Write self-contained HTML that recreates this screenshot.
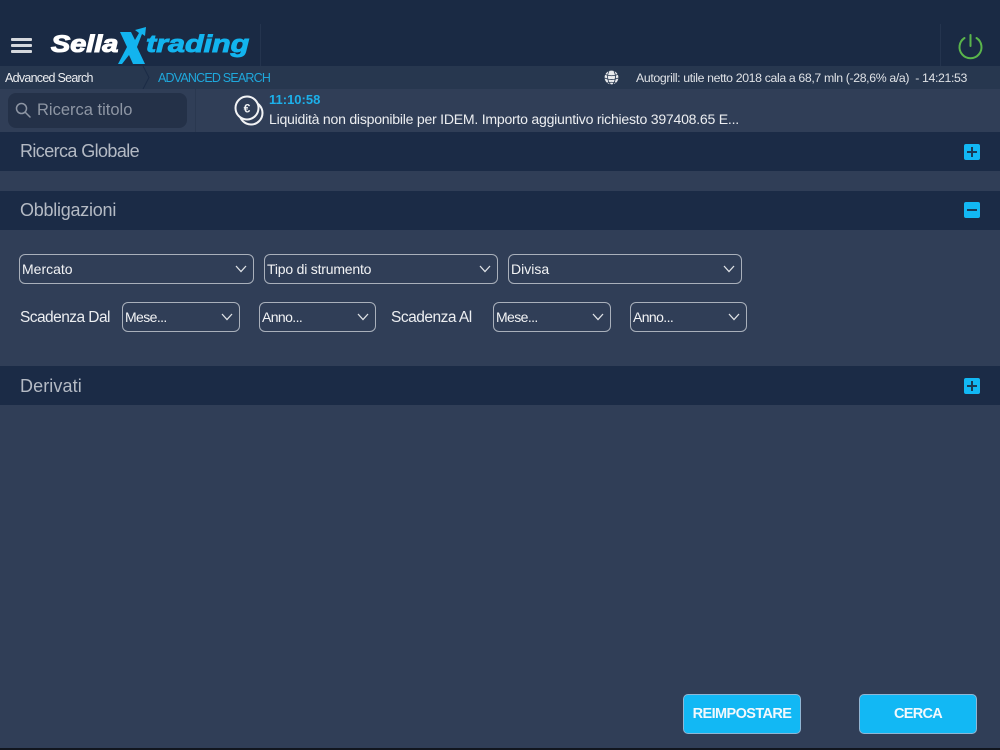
<!DOCTYPE html>
<html>
<head>
<meta charset="utf-8">
<style>
html,body{margin:0;padding:0;background:#303e57;}
#p{position:relative;width:1000px;height:750px;overflow:hidden;background:#303e57;font-family:"Liberation Sans",sans-serif;color:#fff;}
#p div{position:absolute;white-space:nowrap;}
.bar{left:0;width:1000px;height:39px;background:#1b2b46;}
.bt{left:20px;font-size:18px;line-height:39px;color:#b4bac4;}
.sel{box-sizing:border-box;height:30px;border:1.5px solid #a9b0bb;border-radius:6px;font-size:14px;line-height:29px;padding-left:2px;color:#f2f3f5;}
.sel svg{position:absolute;right:6px;top:10px;}
.btn{box-sizing:border-box;top:694px;width:118px;height:40px;background:#12b8f4;border:1.5px solid #8fb6d4;border-radius:5px;font-size:14.500px;font-weight:bold;text-align:center;line-height:39px;color:#f2f8fc;}
.ic{left:964px;width:16px;height:16px;background:#12b8f4;border-radius:2px;}
.lbl{font-size:15.500px;line-height:20px;color:#eceef1;top:308px;}
</style>
</head>
<body>
<div id="p">
  <div style="left:0;top:0;width:1000px;height:66px;background:#1a2a44;"></div>
  <div style="left:260px;top:24px;width:1px;height:42px;background:#24344e;"></div>
  <div style="left:940px;top:24px;width:1px;height:42px;background:#24344e;"></div>

  <div style="left:11px;top:38px;width:21px;height:3px;background:#d5d8dd;border-radius:1px;"></div>
  <div style="left:11px;top:44px;width:21px;height:3px;background:#d5d8dd;border-radius:1px;"></div>
  <div style="left:11px;top:50px;width:21px;height:3px;background:#d5d8dd;border-radius:1px;"></div>

  <div style="left:51px;top:30px;font-size:24px;line-height:30px;font-weight:bold;font-style:italic;color:#fff;-webkit-text-stroke:1.100px #fff;transform:scaleX(1.200);transform-origin:left center;">Sella</div>
  <div style="left:146px;top:30px;font-size:24px;line-height:30px;font-weight:bold;font-style:italic;color:#12b4ef;-webkit-text-stroke:.9px #12b4ef;transform:scaleX(1.270);transform-origin:left center;">trading</div>
  <svg style="position:absolute;left:115px;top:25px;" width="40" height="41" viewBox="0 0 40 41">
    <path fill="#12b4ef" d="M5 7H16L20 15L24 8L20 5L31 2L30 11L27 9L22 22L30 39H18L14 30L7 39H3L12 22Z"/>
  </svg>

  <svg style="position:absolute;left:956px;top:32px;" width="28" height="28" viewBox="0 0 28 28" fill="none" stroke="#5ab54b" stroke-width="2" stroke-linecap="round">
    <path d="M14.500 3V14"/>
    <path d="M8.500 6A11 11 0 1 0 20.500 6"/>
  </svg>

  <div style="left:0;top:66px;width:1000px;height:23px;background:#27374f;"></div>
  <svg style="position:absolute;left:140px;top:66px;" width="12" height="23" viewBox="0 0 12 23" fill="none" stroke="#1b2b46" stroke-width="1"><path d="M3 0L9 11.500L3 23"/></svg>
  <div style="left:5px;top:70px;font-size:12.500px;line-height:16px;color:#eceef1;letter-spacing:-.73px;">Advanced Search</div>
  <div style="left:158px;top:70px;font-size:12.500px;line-height:16px;color:#1fa8dc;letter-spacing:-.8px;">ADVANCED SEARCH</div>
  <svg style="position:absolute;left:604px;top:70px;" width="15" height="15" viewBox="0 0 15 15" fill="#e8eaed" stroke="#27374f" stroke-width=".8">
    <circle cx="7.500" cy="7.500" r="7.300"/>
    <path fill="none" d="M1 4.500C5 6 10 6 14 4.500M.5 8C5 10 10 10 14.500 8M3 13C6 12 9 12 12 13M5 1C2.500 6 3.500 11 6.500 14.500M10 1C12 5 12 10 9 14.500"/>
  </svg>
  <div style="left:636px;top:70px;font-size:12.300px;line-height:16px;color:#dfe2e6;letter-spacing:-.36px;">Autogrill: utile netto 2018 cala a 68,7 mln (-28,6% a/a)&nbsp; - 14:21:53</div>

  <div style="left:195px;top:89px;width:1px;height:43px;background:#2a3850;"></div>
  <div style="left:8px;top:93px;width:179px;height:35px;background:#243148;border-radius:8px;"></div>
  <svg style="position:absolute;left:15px;top:102px;" width="16" height="16" viewBox="0 0 16 16" fill="none" stroke="#8e96a4" stroke-width="1.500" stroke-linecap="round">
    <circle cx="6.500" cy="6.500" r="5"/><path d="M10.500 10.500L15 15"/>
  </svg>
  <div style="left:37px;top:100px;font-size:16.500px;line-height:20px;color:#8e96a4;">Ricerca titolo</div>

  <svg style="position:absolute;left:234px;top:94px;" width="31" height="33" viewBox="0 0 31 33" fill="none" stroke="#f2f3f5" stroke-width="2">
    <circle cx="17" cy="19" r="11.500"/>
    <circle cx="13" cy="14" r="11.500" fill="#303e57"/>
    <text x="13" y="18.500" text-anchor="middle" font-family="Liberation Sans" font-size="12" font-weight="bold" fill="#f2f3f5" stroke="none">€</text>
  </svg>
  <div style="left:269px;top:92px;font-size:13px;line-height:16px;font-weight:bold;color:#1cb0ea;">11:10:58</div>
  <div style="left:269px;top:110px;font-size:14.100px;line-height:18px;color:#eceef1;letter-spacing:-.25px;">Liquidità non disponibile per IDEM. Importo aggiuntivo richiesto 397408.65 E...</div>

  <div class="bar" style="top:132px;"></div>
  <div class="bt" style="top:132px;letter-spacing:-.6px;">Ricerca Globale</div>
  <div class="ic" style="top:144px;"><div style="left:3px;top:7px;width:10px;height:2px;background:#1b3a55;"></div><div style="left:7px;top:3px;width:2px;height:10px;background:#1b3a55;"></div></div>

  <div class="bar" style="top:191px;"></div>
  <div class="bt" style="top:191px;letter-spacing:-.25px;">Obbligazioni</div>
  <div class="ic" style="top:202px;"><div style="left:3px;top:7px;width:10px;height:2px;background:#1b3a55;"></div></div>

  <div class="sel" style="left:19px;top:254px;width:235px;">Mercato<svg width="12" height="8" viewBox="0 0 12 8" fill="none" stroke="#dfe2e6" stroke-width="1.300"><path d="M1 1L6 6.500L11 1"/></svg></div>
  <div class="sel" style="left:264px;top:254px;width:234px;letter-spacing:-.2px;">Tipo di strumento<svg width="12" height="8" viewBox="0 0 12 8" fill="none" stroke="#dfe2e6" stroke-width="1.300"><path d="M1 1L6 6.500L11 1"/></svg></div>
  <div class="sel" style="left:508px;top:254px;width:234px;">Divisa<svg width="12" height="8" viewBox="0 0 12 8" fill="none" stroke="#dfe2e6" stroke-width="1.300"><path d="M1 1L6 6.500L11 1"/></svg></div>

  <div class="lbl" style="left:20px;letter-spacing:-.55px;">Scadenza Dal</div>
  <div class="sel" style="left:122px;top:302px;width:118px;letter-spacing:-.6px;">Mese...<svg width="12" height="8" viewBox="0 0 12 8" fill="none" stroke="#dfe2e6" stroke-width="1.300"><path d="M1 1L6 6.500L11 1"/></svg></div>
  <div class="sel" style="left:259px;top:302px;width:117px;letter-spacing:-.6px;">Anno...<svg width="12" height="8" viewBox="0 0 12 8" fill="none" stroke="#dfe2e6" stroke-width="1.300"><path d="M1 1L6 6.500L11 1"/></svg></div>
  <div class="lbl" style="left:391px;letter-spacing:-.5px;">Scadenza Al</div>
  <div class="sel" style="left:493px;top:302px;width:118px;letter-spacing:-.6px;">Mese...<svg width="12" height="8" viewBox="0 0 12 8" fill="none" stroke="#dfe2e6" stroke-width="1.300"><path d="M1 1L6 6.500L11 1"/></svg></div>
  <div class="sel" style="left:630px;top:302px;width:117px;letter-spacing:-.6px;">Anno...<svg width="12" height="8" viewBox="0 0 12 8" fill="none" stroke="#dfe2e6" stroke-width="1.300"><path d="M1 1L6 6.500L11 1"/></svg></div>

  <div class="bar" style="top:366px;"></div>
  <div class="bt" style="top:367px;letter-spacing:.1px;">Derivati</div>
  <div class="ic" style="top:378px;"><div style="left:3px;top:7px;width:10px;height:2px;background:#1b3a55;"></div><div style="left:7px;top:3px;width:2px;height:10px;background:#1b3a55;"></div></div>

  <div class="btn" style="left:683px;letter-spacing:-.6px;">REIMPOSTARE</div>
  <div class="btn" style="left:859px;letter-spacing:-.7px;">CERCA</div>

  <div style="left:0;top:748px;width:1000px;height:2px;background:#11161f;"></div>
</div>
</body>
</html>
